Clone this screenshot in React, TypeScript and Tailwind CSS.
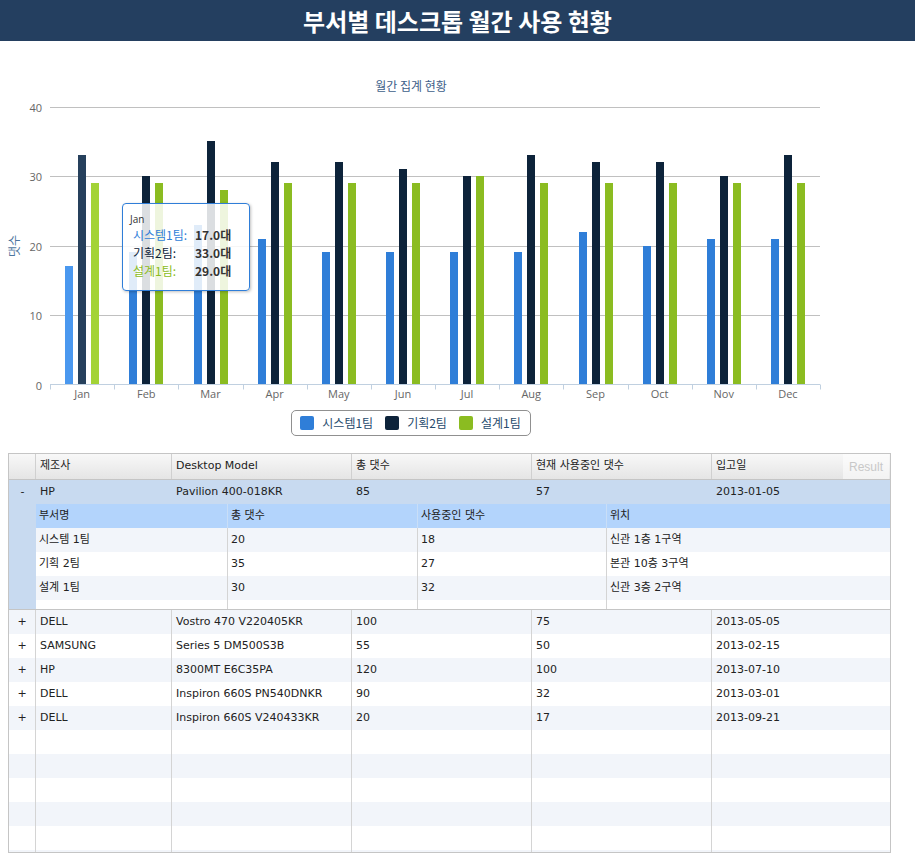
import React from 'react';

const months = ['Jan', 'Feb', 'Mar', 'Apr', 'May', 'Jun', 'Jul', 'Aug', 'Sep', 'Oct', 'Nov', 'Dec'];
const s1 = [17, 19, 23, 21, 19, 19, 19, 19, 22, 20, 21, 21];
const s2 = [33, 30, 35, 32, 32, 31, 30, 33, 32, 32, 30, 33];
const s3 = [29, 29, 28, 29, 29, 29, 30, 29, 29, 29, 29, 29];

const C1 = '#2f7ed8';
const C2 = '#0d233a';
const C3 = '#8bbc21';
const H1 = '#4a98ef';
const H2 = '#26405c';
const H3 = '#a3d336';

const PL = 50;
const PR = 820;
const CW = (PR - PL) / 12;
const Y0 = 384.5;
const PX = 6.95;

const CJK = '"Noto Sans CJK KR", sans-serif';

function Chart() {
  const grid = [0, 10, 20, 30, 40];
  return (
    <svg width={822} height={360} className="block">
      <g transform="translate(0,-41)">
        <text x={411} y={91} textAnchor="middle" fontSize={12} fill="#3e5f8a" fontFamily={CJK}>
          월간 집계 현황
        </text>
        <text
          x={13}
          y={246}
          textAnchor="middle"
          dominantBaseline="central"
          fontSize={12}
          fill="#4d759e"
          fontFamily={CJK}
          transform="rotate(-90 13 246)"
        >
          댓수
        </text>
        {grid.map((v) => {
          const y = Math.round(Y0 - v * PX) + 0.5;
          return (
            <g key={v}>
              {v !== 0 && <line x1={PL} x2={PR} y1={y} y2={y} stroke="#c0c0c0" strokeWidth={1} />}
              <text
                x={42}
                y={y + 4}
                textAnchor="end"
                fontSize={11}
                fill="#666"
                fontFamily='"Open Sans", sans-serif'
              >
                {v}
              </text>
            </g>
          );
        })}
        {months.map((m, i) => {
          const left = PL + i * CW;
          const bars = [
            { v: s1[i], c: i === 0 ? H1 : C1, o: 15.3 },
            { v: s2[i], c: i === 0 ? H2 : C2, o: 28.3 },
            { v: s3[i], c: i === 0 ? H3 : C3, o: 41.3 },
          ];
          return (
            <g key={m}>
              {bars.map((b, j) => {
                const top = Math.round(Y0 - b.v * PX);
                return (
                  <rect key={j} x={Math.round(left + b.o)} y={top} width={8} height={384 - top} fill={b.c} />
                );
              })}
              <text
                x={left + CW / 2}
                y={397.5}
                textAnchor="middle"
                fontSize={11}
                fill="#666"
                fontFamily='"Open Sans", sans-serif'
              >
                {m}
              </text>
            </g>
          );
        })}
        <line x1={PL} x2={PR} y1={384.5} y2={384.5} stroke="#c0d0e0" strokeWidth={1} />
        {Array.from({ length: 13 }).map((_, i) => {
          const x = Math.round(PL + i * CW) + 0.5;
          return <line key={i} x1={x} x2={x} y1={384.5} y2={389.5} stroke="#c0d0e0" strokeWidth={1} />;
        })}
      </g>
    </svg>
  );
}

function Tooltip() {
  const rows = [
    { n: '시스템1팀:', v: '17.0대', c: 'text-[#2f7ed8]' },
    { n: '기획2팀:', v: '33.0대', c: 'text-[#0d233a]' },
    { n: '설계1팀:', v: '29.0대', c: 'text-[#8bbc21]' },
  ];
  return (
    <div className="absolute left-[122px] top-[162px] w-[128px] h-[88px] rounded-[4px] border border-[#2f7ed8] bg-white/[0.85] shadow-[1px_1px_3px_rgba(0,0,0,0.25)] pt-[8px] pl-[7px] font-['Noto_Sans_CJK_KR',sans-serif]">
      <div className="h-[14px] text-[10px] leading-[14px] text-[#333] font-['Open_Sans',sans-serif]">Jan</div>
      {rows.map((r) => (
        <div key={r.n} className="flex h-[18px] items-center text-[12px] leading-[18px]">
          <span className={`w-[65px] pl-[3px] ${r.c}`}>{r.n}</span>
          <span className="font-bold text-[#333]">{r.v}</span>
        </div>
      ))}
    </div>
  );
}

function Legend() {
  const items = [
    { n: '시스템1팀', c: 'bg-[#2f7ed8]' },
    { n: '기획2팀', c: 'bg-[#0d233a]' },
    { n: '설계1팀', c: 'bg-[#8bbc21]' },
  ];
  return (
    <div className="flex justify-center pt-[9px]">
      <div className="flex h-[26px] items-center gap-[12px] rounded-[5px] border border-[#909090] pl-[8px] pr-[9px]">
        {items.map((it) => (
          <div key={it.n} className="flex items-center gap-[8px]">
            <span className={`block h-[14px] w-[14px] rounded-[2px] ${it.c}`} />
            <span className="text-[12px] leading-[16px] text-[#274b6d] font-['Noto_Sans_CJK_KR',sans-serif]">
              {it.n}
            </span>
          </div>
        ))}
      </div>
    </div>
  );
}

const mainRows = [
  ['DELL', 'Vostro 470 V220405KR', '100', '75', '2013-05-05'],
  ['SAMSUNG', 'Series 5 DM500S3B', '55', '50', '2013-02-15'],
  ['HP', '8300MT E6C35PA', '120', '100', '2013-07-10'],
  ['DELL', 'Inspiron 660S PN540DNKR', '90', '32', '2013-03-01'],
  ['DELL', 'Inspiron 660S V240433KR', '20', '17', '2013-09-21'],
];

const nested = [
  ['시스템 1팀', '20', '18', '신관 1층 1구역'],
  ['기획 2팀', '35', '27', '본관 10층 3구역'],
  ['설계 1팀', '30', '32', '신관 3층 2구역'],
];

function DataRow({ cells, sign, alt }: { cells: string[]; sign: string; alt: boolean }) {
  const bg = alt ? 'bg-[#f2f5fa]' : 'bg-white';
  return (
    <div className={`flex h-[24px] shrink-0 ${bg}`}>
      <div className="flex w-[27px] items-center justify-center border-r border-[#d4d4d4]">{sign}</div>
      <div className="flex w-[136px] items-center border-r border-[#d4d4d4] pl-[4px]">{cells[0]}</div>
      <div className="flex w-[180px] items-center border-r border-[#d4d4d4] pl-[4px]">{cells[1]}</div>
      <div className="flex w-[180px] items-center border-r border-[#d4d4d4] pl-[4px]">{cells[2]}</div>
      <div className="flex w-[180px] items-center border-r border-[#d4d4d4] pl-[4px]">{cells[3]}</div>
      <div className="flex w-[178px] items-center pl-[4px]">{cells[4]}</div>
    </div>
  );
}

function NestedRow({ cells, cls, h, border }: { cells: string[]; cls: string; h: string; border: string }) {
  return (
    <div className={`flex ${h} shrink-0 ${cls}`}>
      <div className={`flex w-[192px] items-center border-r ${border} pl-[3px]`}>{cells[0]}</div>
      <div className={`flex w-[190px] items-center border-r ${border} pl-[3px]`}>{cells[1]}</div>
      <div className={`flex w-[189px] items-center border-r ${border} pl-[3px]`}>{cells[2]}</div>
      <div className="flex w-[283px] items-center pl-[3px]">{cells[3]}</div>
    </div>
  );
}

function Grid() {
  const fillers = Array.from({ length: 6 });
  return (
    <div className="relative ml-[8px] mt-[17px] flex h-[400px] w-[883px] flex-col overflow-hidden border border-[#c5c5c5] text-[11px] text-[#222] font-['DejaVu_Sans','Noto_Sans_CJK_KR',sans-serif]">
      <div className="flex h-[26px] shrink-0 border-b border-[#c5c5c5] bg-gradient-to-b from-[#f8f8f8] to-[#e5e5e5]">
        <div className="w-[27px] border-r border-[#d0d0d0]" />
        <div className="flex w-[136px] items-center border-r border-[#d0d0d0] pl-[4px]">제조사</div>
        <div className="flex w-[180px] items-center border-r border-[#d0d0d0] pl-[4px]">Desktop Model</div>
        <div className="flex w-[180px] items-center border-r border-[#d0d0d0] pl-[4px]">총 댓수</div>
        <div className="flex w-[180px] items-center border-r border-[#d0d0d0] pl-[4px]">현재 사용중인 댓수</div>
        <div className="flex w-[178px] items-center pl-[4px]">입고일</div>
      </div>
      <div className="absolute right-[1px] top-[0px] flex h-[25px] w-[46px] items-center justify-center bg-white/50 text-[12px] text-[#c8c8c8] font-['Liberation_Sans',sans-serif]">
        Result
      </div>

      <div className="flex h-[24px] shrink-0 bg-[#c8daf0]">
        <div className="flex w-[27px] items-center justify-center">-</div>
        <div className="flex w-[136px] items-center pl-[4px]">HP</div>
        <div className="flex w-[180px] items-center pl-[4px]">Pavilion 400-018KR</div>
        <div className="flex w-[180px] items-center pl-[4px]">85</div>
        <div className="flex w-[180px] items-center pl-[4px]">57</div>
        <div className="flex w-[178px] items-center pl-[4px]">2013-01-05</div>
      </div>

      <div className="flex h-[106px] shrink-0 border-b border-[#c5c5c5]">
        <div className="w-[27px] bg-[#c8daf0]" />
        <div className="flex w-[854px] flex-col bg-white">
          <NestedRow
            cells={['부서명', '총 댓수', '사용중인 댓수', '위치']}
            cls="bg-[#b3d4fc]"
            h="h-[24px]"
            border="border-[#c9def7]"
          />
          {nested.map((r, i) => (
            <NestedRow
              key={i}
              cells={r}
              cls={i % 2 === 0 ? 'bg-[#f2f5fa]' : 'bg-white'}
              h="h-[24px]"
              border="border-[#d4d4d4]"
            />
          ))}
          <NestedRow cells={['', '', '', '']} cls="bg-white" h="flex-1" border="border-[#d4d4d4]" />
        </div>
      </div>

      {mainRows.map((r, i) => (
        <DataRow key={i} cells={r} sign="+" alt={i % 2 === 0} />
      ))}
      {fillers.map((_, i) => (
        <DataRow key={`f${i}`} cells={['', '', '', '', '']} sign="" alt={i % 2 === 1} />
      ))}
    </div>
  );
}

export default function App() {
  return (
    <div className="min-h-[858px] w-[915px] bg-white">
      <div className="flex h-[41px] items-center justify-center bg-[#243f60]">
        <h1 className="text-[24px] font-bold leading-[28px] text-white font-['Noto_Sans_CJK_KR',sans-serif]">
          부서별 데스크톱 월간 사용 현황
        </h1>
      </div>
      <div className="relative w-[822px]">
        <Chart />
        <Tooltip />
        <Legend />
      </div>
      <Grid />
    </div>
  );
}
